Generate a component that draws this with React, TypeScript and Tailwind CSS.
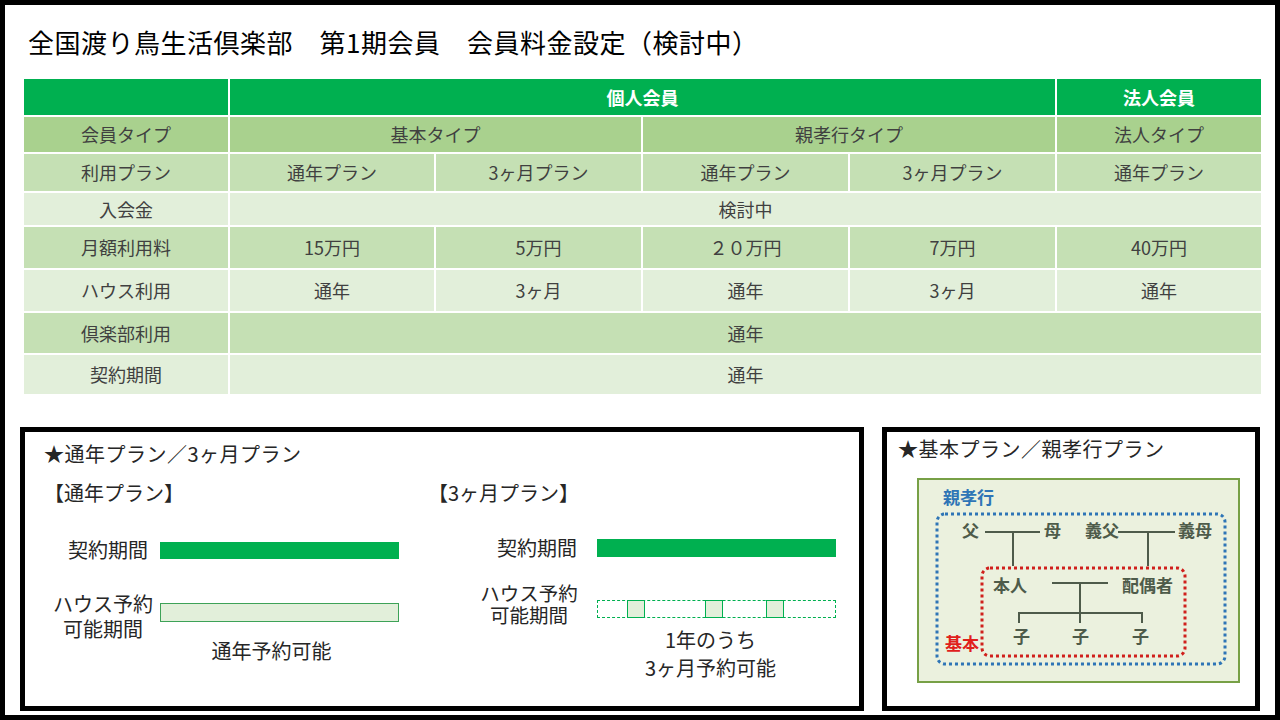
const head = "bg-[#00B050] text-white font-bold";

const rows: { h: string; bg: string; label: string; cells: { t: string; span?: number }[] }[] = [
  { h: "h-[37px]", bg: "bg-[#A9D18E]", label: "会員タイプ", cells: [{ t: "基本タイプ", span: 2 }, { t: "親孝行タイプ", span: 2 }, { t: "法人タイプ" }] },
  { h: "h-[39px]", bg: "bg-[#C5E0B4]", label: "利用プラン", cells: [{ t: "通年プラン" }, { t: "3ヶ月プラン" }, { t: "通年プラン" }, { t: "3ヶ月プラン" }, { t: "通年プラン" }] },
  { h: "h-[34px]", bg: "bg-[#E2EFDA]", label: "入会金", cells: [{ t: "検討中", span: 5 }] },
  { h: "h-[43px]", bg: "bg-[#C5E0B4]", label: "月額利用料", cells: [{ t: "15万円" }, { t: "5万円" }, { t: "２０万円" }, { t: "7万円" }, { t: "40万円" }] },
  { h: "h-[43px]", bg: "bg-[#E2EFDA]", label: "ハウス利用", cells: [{ t: "通年" }, { t: "3ヶ月" }, { t: "通年" }, { t: "3ヶ月" }, { t: "通年" }] },
  { h: "h-[42px]", bg: "bg-[#C5E0B4]", label: "倶楽部利用", cells: [{ t: "通年", span: 5 }] },
  { h: "h-[41px]", bg: "bg-[#E2EFDA]", label: "契約期間", cells: [{ t: "通年", span: 5 }] },
];

const FeeTable = () => (
  <table className="ml-[17px] mt-[17px] w-[1239px] table-fixed border-collapse text-[18px] text-[#404040]">
    <colgroup>
      <col className="w-[206px]" />
      <col className="w-[206px]" />
      <col className="w-[207px]" />
      <col className="w-[207px]" />
      <col className="w-[207px]" />
      <col className="w-[206px]" />
    </colgroup>
    <tbody>
      <tr className="h-[38px]">
        <td className={`border-2 border-white ${head}`}></td>
        <td colSpan={4} className={`border-2 border-white text-center ${head}`}>個人会員</td>
        <td className={`border-2 border-white text-center ${head}`}>法人会員</td>
      </tr>
      {rows.map((r) => (
        <tr key={r.label} className={`${r.h} ${r.bg}`}>
          <td className="border-2 border-white text-center">{r.label}</td>
          {r.cells.map((c, i) => (
            <td key={i} colSpan={c.span} className="border-2 border-white text-center">{c.t}</td>
          ))}
        </tr>
      ))}
    </tbody>
  </table>
);

const PlanPanel = () => (
  <div className="w-[844px] h-[284px] border-[5px] border-black pl-[19px] pt-[8px] text-[20px] leading-[28px] text-[#262626]">
    <div className="tracking-[0.5px]">★通年プラン／3ヶ月プラン</div>
    <div className="flex mt-[11px]">
      {/* 通年 */}
      <div className="w-[384px]">
        <div>【通年プラン】</div>
        <div className="flex items-center mt-[29px] h-[28px]">
          <div className="w-[116px] flex justify-end pr-[12px]">契約期間</div>
          <div className="w-[239px] h-[17px] bg-[#00B050]"></div>
        </div>
        <div className="flex mt-[27px]">
          <div className="w-[116px] flex justify-end">
            <div className="w-[104px] mr-[5px] text-center leading-[25px]">ハウス予約可能期間</div>
          </div>
          <div className="w-[239px] pt-[12px]">
            <div className="h-[19px] bg-[#E2EFDA] border border-[#3DA257]"></div>
            <div className="mt-[15px] pr-[16px] text-center">通年予約可能</div>
          </div>
        </div>
      </div>
      {/* 3ヶ月 */}
      <div>
        <div>【3ヶ月プラン】</div>
        <div className="flex items-center mt-[27px] h-[28px]">
          <div className="w-[169px] flex justify-end pr-[20px]">契約期間</div>
          <div className="w-[239px] h-[18px] bg-[#00B050]"></div>
        </div>
        <div className="flex mt-[20px]">
          <div className="w-[169px] flex justify-end">
            <div className="w-[100px] mr-[18px] text-center text-[19.5px] leading-[22px]">ハウス予約可能期間</div>
          </div>
          <div className="w-[239px] pt-[18px]">
            <div className="flex h-[18px] border border-dashed border-[#00B050]">
              <div className="ml-[29px] -my-px w-[18px] h-[18px] bg-[#E2EFDA] border border-[#00B050]"></div>
              <div className="ml-[60px] -my-px w-[18px] h-[18px] bg-[#E2EFDA] border border-[#00B050]"></div>
              <div className="ml-[43px] -my-px w-[18px] h-[18px] bg-[#E2EFDA] border border-[#00B050]"></div>
            </div>
            <div className="mt-[8px] pr-[12px] text-center">1年のうち<br />3ヶ月予約可能</div>
          </div>
        </div>
      </div>
    </div>
  </div>
);

const fam = "#4E5B4A";

const FamilyFigure = () => (
  <svg width="323" height="205" viewBox="0 0 323 205" className="block font-['Noto_Sans_CJK_JP',sans-serif]">
    <rect x="1" y="1" width="321" height="203" fill="#EBF1DE" stroke="#77A046" strokeWidth="2" />
    <text x="26" y="26" fontSize="17" fontWeight="bold" fill="#2E75B6">親孝行</text>
    <rect x="20" y="36" width="288" height="150" rx="8" fill="none" stroke="#2E75B6" strokeWidth="3" strokeDasharray="3 3" />
    <rect x="65" y="90" width="203" height="88" rx="8" fill="none" stroke="#D0201C" strokeWidth="3" strokeDasharray="3 3" />
    <text x="28" y="172" fontSize="17" fontWeight="bold" fill="#E0201B">基本</text>
    <g stroke={fam} strokeWidth="2" fill="none">
      <line x1="68" y1="54" x2="123" y2="54" />
      <line x1="96" y1="54" x2="96" y2="88" />
      <line x1="201" y1="54" x2="258" y2="54" />
      <line x1="231" y1="54" x2="231" y2="88" />
      <line x1="135" y1="105" x2="191" y2="105" />
      <line x1="163" y1="105" x2="163" y2="145" />
      <polyline points="102,145 102,135 225,135 225,145" />
    </g>
    <g fontSize="17" fontWeight="bold" fill={fam}>
      <text x="45" y="59">父</text>
      <text x="127" y="59">母</text>
      <text x="168" y="59">義父</text>
      <text x="261" y="59">義母</text>
      <text x="76" y="114">本人</text>
      <text x="205" y="114">配偶者</text>
      <text x="96" y="165">子</text>
      <text x="155" y="165">子</text>
      <text x="215" y="165">子</text>
    </g>
  </svg>
);

const FamilyPanel = () => (
  <div className="w-[378px] h-[284px] border-[5px] border-black pl-[11px] pt-[3px] text-[20px] leading-[28px] text-[#262626]">
    <div className="tracking-[0.5px]">★基本プラン／親孝行プラン</div>
    <div className="ml-[19px] mt-[15px]">
      <FamilyFigure />
    </div>
  </div>
);

export default function App() {
  return (
    <div className="w-[1280px] h-[720px] bg-black p-[5px] font-['Noto_Sans_CJK_JP',sans-serif]">
      <div className="w-full h-full bg-white flex flex-col">
        <div className="pl-[23px] pt-[19px] text-[26px] leading-[36px] tracking-[0.5px] text-black">
          全国渡り鳥生活倶楽部　第1期会員　会員料金設定（検討中）
        </div>
        <FeeTable />
        <div className="flex gap-[18px] ml-[15px] mt-[31px]">
          <PlanPanel />
          <FamilyPanel />
        </div>
      </div>
    </div>
  );
}
